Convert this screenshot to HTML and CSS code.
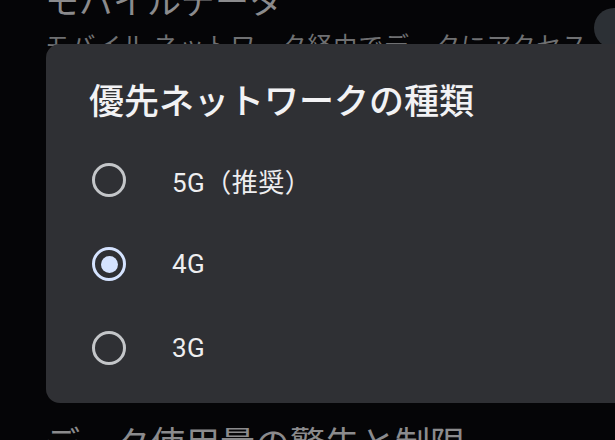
FILE: index.html
```html
<!DOCTYPE html>
<html lang="ja">
<head>
<meta charset="utf-8">
<title>優先ネットワークの種類</title>
<link rel="stylesheet" href="styles.css">
</head>
<body>
<div class="screen">
  <div class="settings">
    <div class="setting-title">モバイルデータ</div>
    <div class="setting-sub">モバイル ネットワーク経由でデータにアクセス</div>
    <div class="spacer"></div>
    <div class="setting-title bottom">データ使用量の警告と制限</div>
  </div>
  <div class="switch-thumb"></div>

  <div class="dialog">
    <div class="dialog-title">優先ネットワークの種類</div>
    <div class="options">
      <div class="option">
        <span class="radio"></span>
        <span class="label">5G（推奨）</span>
      </div>
      <div class="option">
        <span class="radio checked"></span>
        <span class="label">4G</span>
      </div>
      <div class="option">
        <span class="radio"></span>
        <span class="label">3G</span>
      </div>
    </div>
  </div>
</div>
</body>
</html>
```

FILE: styles.css
```css
html, body {
  margin: 0;
  padding: 0;
  background: #050507;
}

.screen {
  position: relative;
  width: 615px;
  height: 440px;
  overflow: hidden;
  background: #050507;
  font-family: "Noto Sans CJK JP", sans-serif;
}

.settings {
  display: flex;
  flex-direction: column;
  padding-left: 45px;
  margin-top: -20px;
}

.setting-title {
  font-size: 34px;
  line-height: 40px;
  color: #8b8b8d;
  white-space: nowrap;
}

.setting-title.bottom {
  font-size: 35px;
}

.setting-sub {
  font-size: 25px;
  letter-spacing: 0.6px;
  line-height: 32px;
  margin-top: 8px;
  color: #6f7072;
  white-space: nowrap;
}

.spacer {
  height: 362px;
}

.switch-thumb {
  position: absolute;
  left: 594px;
  top: 8px;
  width: 40px;
  height: 40px;
  border-radius: 50%;
  background: #2c3035;
}

.dialog {
  position: absolute;
  left: 46px;
  top: 44px;
  width: 600px;
  height: 359px;
  box-sizing: border-box;
  background: #2f3034;
  border-radius: 14px;
  padding: 35px 0 14px 43px;
  display: flex;
  flex-direction: column;
}

.dialog-title {
  font-size: 35px;
  line-height: 40px;
  font-weight: 500;
  color: #f2f2f4;
  white-space: nowrap;
}

.options {
  display: flex;
  flex-direction: column;
  margin-top: 19px;
}

.option {
  display: flex;
  align-items: center;
  height: 84px;
  padding-left: 3px;
}

.radio {
  width: 34px;
  height: 34px;
  box-sizing: border-box;
  border: 3px solid #c4c6c9;
  border-radius: 50%;
  display: flex;
  align-items: center;
  justify-content: center;
  flex: none;
}

.radio.checked {
  border-color: #d5e3ff;
}

.radio.checked::after {
  content: "";
  width: 17px;
  height: 17px;
  border-radius: 50%;
  background: #d5e3ff;
}

.label {
  margin-left: 46px;
  font-family: Roboto, "Noto Sans CJK JP", sans-serif;
  font-size: 26px;
  letter-spacing: 0.5px;
  color: #eeeef0;
  white-space: nowrap;
}
```
